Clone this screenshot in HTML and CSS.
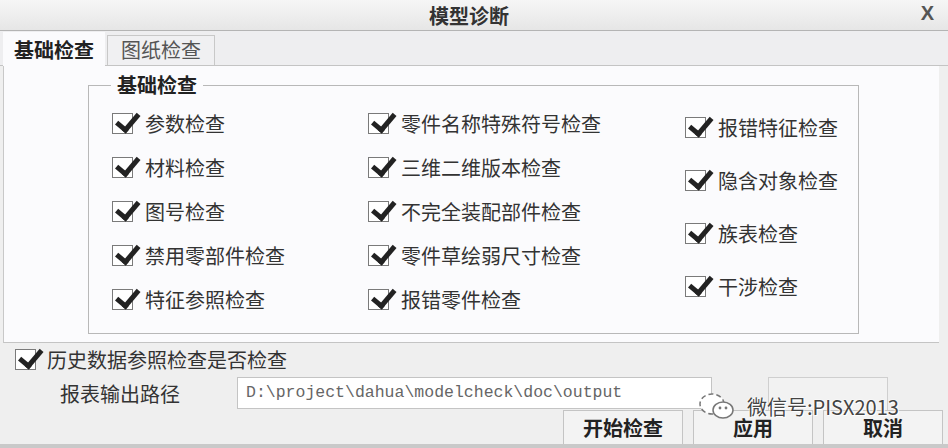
FILE: index.html
```html
<!DOCTYPE html>
<html lang="zh">
<head>
    <meta charset="UTF-8">
    <title>模型诊断</title>
    <link rel="stylesheet" href="styles.css">
</head>
<body>
    <div class="window">
        <!-- Titelleiste -->
        <div class="titlebar">
            <span class="title">模型诊断</span>
            <span class="close">X</span>
        </div>

        <!-- Reiter -->
        <div class="tabs">
            <div class="tab active">基础检查</div>
            <div class="tab">图纸检查</div>
        </div>

        <div class="panel">
            <fieldset class="group">
                <legend>基础检查</legend>
                <div class="cols">
                    <div class="col col-a">
                        <label class="item"><span class="box"></span>参数检查</label>
                        <label class="item"><span class="box"></span>材料检查</label>
                        <label class="item"><span class="box"></span>图号检查</label>
                        <label class="item"><span class="box"></span>禁用零部件检查</label>
                        <label class="item"><span class="box"></span>特征参照检查</label>
                    </div>
                    <div class="col col-a">
                        <label class="item"><span class="box"></span>零件名称特殊符号检查</label>
                        <label class="item"><span class="box"></span>三维二维版本检查</label>
                        <label class="item"><span class="box"></span>不完全装配部件检查</label>
                        <label class="item"><span class="box"></span>零件草绘弱尺寸检查</label>
                        <label class="item"><span class="box"></span>报错零件检查</label>
                    </div>
                    <div class="col col-b">
                        <label class="item"><span class="box"></span>报错特征检查</label>
                        <label class="item"><span class="box"></span>隐含对象检查</label>
                        <label class="item"><span class="box"></span>族表检查</label>
                        <label class="item"><span class="box"></span>干涉检查</label>
                    </div>
                </div>
            </fieldset>
        </div>

        <div class="bottom">
            <label class="item history"><span class="box"></span>历史数据参照检查是否检查</label>
            <div class="path-row">
                <span class="path-label">报表输出路径</span>
                <div class="path-input">D:\project\dahua\modelcheck\doc\output</div>
                <div class="browse"></div>
            </div>
            <div class="buttons">
                <button class="btn">开始检查</button>
                <button class="btn">应用</button>
                <button class="btn">取消</button>
            </div>
        </div>
        <div class="edge"></div>

        <!-- Wasserzeichen -->
        <div class="watermark">
            <svg width="40" height="30" viewBox="0 0 40 30">
                <ellipse cx="15" cy="13" rx="12" ry="10" fill="#fff" stroke="#777" stroke-width="1.5" stroke-dasharray="5 3"/>
                <ellipse cx="26" cy="19" rx="10" ry="8" fill="#fff" stroke="#777" stroke-width="1.5"/>
                <circle cx="23" cy="17" r="1.4" fill="#777"/>
                <circle cx="29" cy="17" r="1.4" fill="#777"/>
            </svg>
            <span>微信号:PISX2013</span>
        </div>
    </div>
</body>
</html>
```

FILE: styles.css
```css
body {
    margin: 0;
    font-family: "Noto Sans CJK SC", "Noto Sans", sans-serif;
    background-color: #efefef;
}
.window {
    position: relative;
    width: 948px;
    height: 448px;
    overflow: hidden;
    background-color: #efefef;
    color: #222;
}
.titlebar {
    height: 30px;
    background: linear-gradient(#f6f6f6, #e6e6e6);
    border-bottom: 1px solid #b4b4b4;
    display: flex;
    align-items: center;
    justify-content: center;
    position: relative;
}
.title {
    font-size: 20px;
    font-weight: bold;
    color: #333;
    margin-left: -10px;
}
.close {
    position: absolute;
    right: 14px;
    top: 2px;
    font-family: "Liberation Sans", sans-serif;
    font-weight: bold;
    font-size: 20px;
    color: #555;
}
.tabs {
    height: 34px;
    display: flex;
    align-items: flex-end;
    padding-left: 3px;
    background-color: #eeeef0;
    border-bottom: 1px solid #c4c4c4;
}
.tab {
    width: 106px;
    height: 29px;
    line-height: 28px;
    font-size: 20px;
    text-align: center;
    color: #555;
    background-color: #f0f0f2;
    border: 1px solid #c8c8c8;
    border-bottom: none;
    margin-left: 2px;
}
.tab.active {
    width: 102px;
    height: 34px;
    line-height: 36px;
    margin-left: 0;
    margin-bottom: -1px;
    font-weight: bold;
    color: #222;
    background-color: #fbfbfd;
    border: none;
}
.panel {
    height: 277px;
    margin: 0 9px 0 3px;
    background-color: #fbfbfd;
    border-left: 1px solid #c8c8c8;
    border-bottom: 1px solid #c4c4c4;
    box-sizing: border-box;
    padding-top: 7px;
}
.group {
    margin: 0 0 0 84px;
    padding: 0;
    width: 771px;
    height: 261px;
    box-sizing: border-box;
    border: 1px solid #b8b8b8;
}
.group legend {
    margin-left: 22px;
    padding: 0 6px;
    font-size: 20px;
    font-weight: bold;
    line-height: 24px;
    color: #222;
}
.cols {
    display: grid;
    grid-template-columns: 256px 317px auto;
    padding-left: 23px;
}
.col {
    display: flex;
    flex-direction: column;
}
.col-a {
    padding-top: 14px;
    gap: 20px;
}
.col-b {
    padding-top: 18px;
    gap: 29px;
}
.item {
    display: flex;
    align-items: center;
    height: 24px;
    font-size: 20px;
    color: #333;
}
.box {
    position: relative;
    width: 19px;
    height: 19px;
    border: 1px solid #7a7a7a;
    background-color: #fff;
    margin-right: 12px;
    flex-shrink: 0;
}
.box::after {
    content: "";
    position: absolute;
    left: 3px;
    top: -6px;
    width: 9px;
    height: 18px;
    border-right: 5px solid #222;
    border-bottom: 5px solid #222;
    transform: rotate(40deg);
    transform-origin: 60% 80%;
}
.bottom {
    height: 101px;
    padding-left: 15px;
    display: flex;
    flex-direction: column;
    background-color: #efefef;
}
.history {
    margin-top: 2px;
    height: 28px;
}
.history .box {
    margin-right: 11px;
}
.path-row {
    display: flex;
    align-items: center;
    height: 34px;
    margin-top: 3px;
}
.path-label {
    font-size: 20px;
    color: #333;
    margin-left: 45px;
    width: 177px;
}
.path-input {
    width: 475px;
    height: 32px;
    box-sizing: border-box;
    border: 1px solid #c4c4c4;
    background-color: #fff;
    font-family: "Liberation Mono", monospace;
    font-size: 16.5px;
    color: #666;
    padding-left: 8px;
    line-height: 30px;
}
.browse {
    width: 120px;
    height: 34px;
    margin-left: 56px;
    margin-top: 2px;
    box-sizing: border-box;
    border: 1px solid #cfcfcf;
    border-bottom: none;
    background-color: #f2f2f2;
}
.buttons {
    display: flex;
    justify-content: flex-end;
    gap: 10px;
    padding-right: 5px;
}
.btn {
    width: 120px;
    height: 34px;
    font-family: "Noto Sans CJK SC", sans-serif;
    font-size: 20px;
    font-weight: bold;
    color: #222;
    background-color: #f3f3f3;
    border: 1px solid #c4c4c4;
    border-bottom: none;
    padding: 0;
}
.edge {
    height: 4px;
    background-color: #c9c9c9;
}
.watermark {
    position: absolute;
    left: 697px;
    top: 391px;
    display: flex;
    align-items: center;
    gap: 10px;
}
.watermark span {
    font-size: 20px;
    color: #444;
    text-shadow: 0 0 2px #fff, 0 0 2px #fff, 1px 1px 0 #fff;
}
```
